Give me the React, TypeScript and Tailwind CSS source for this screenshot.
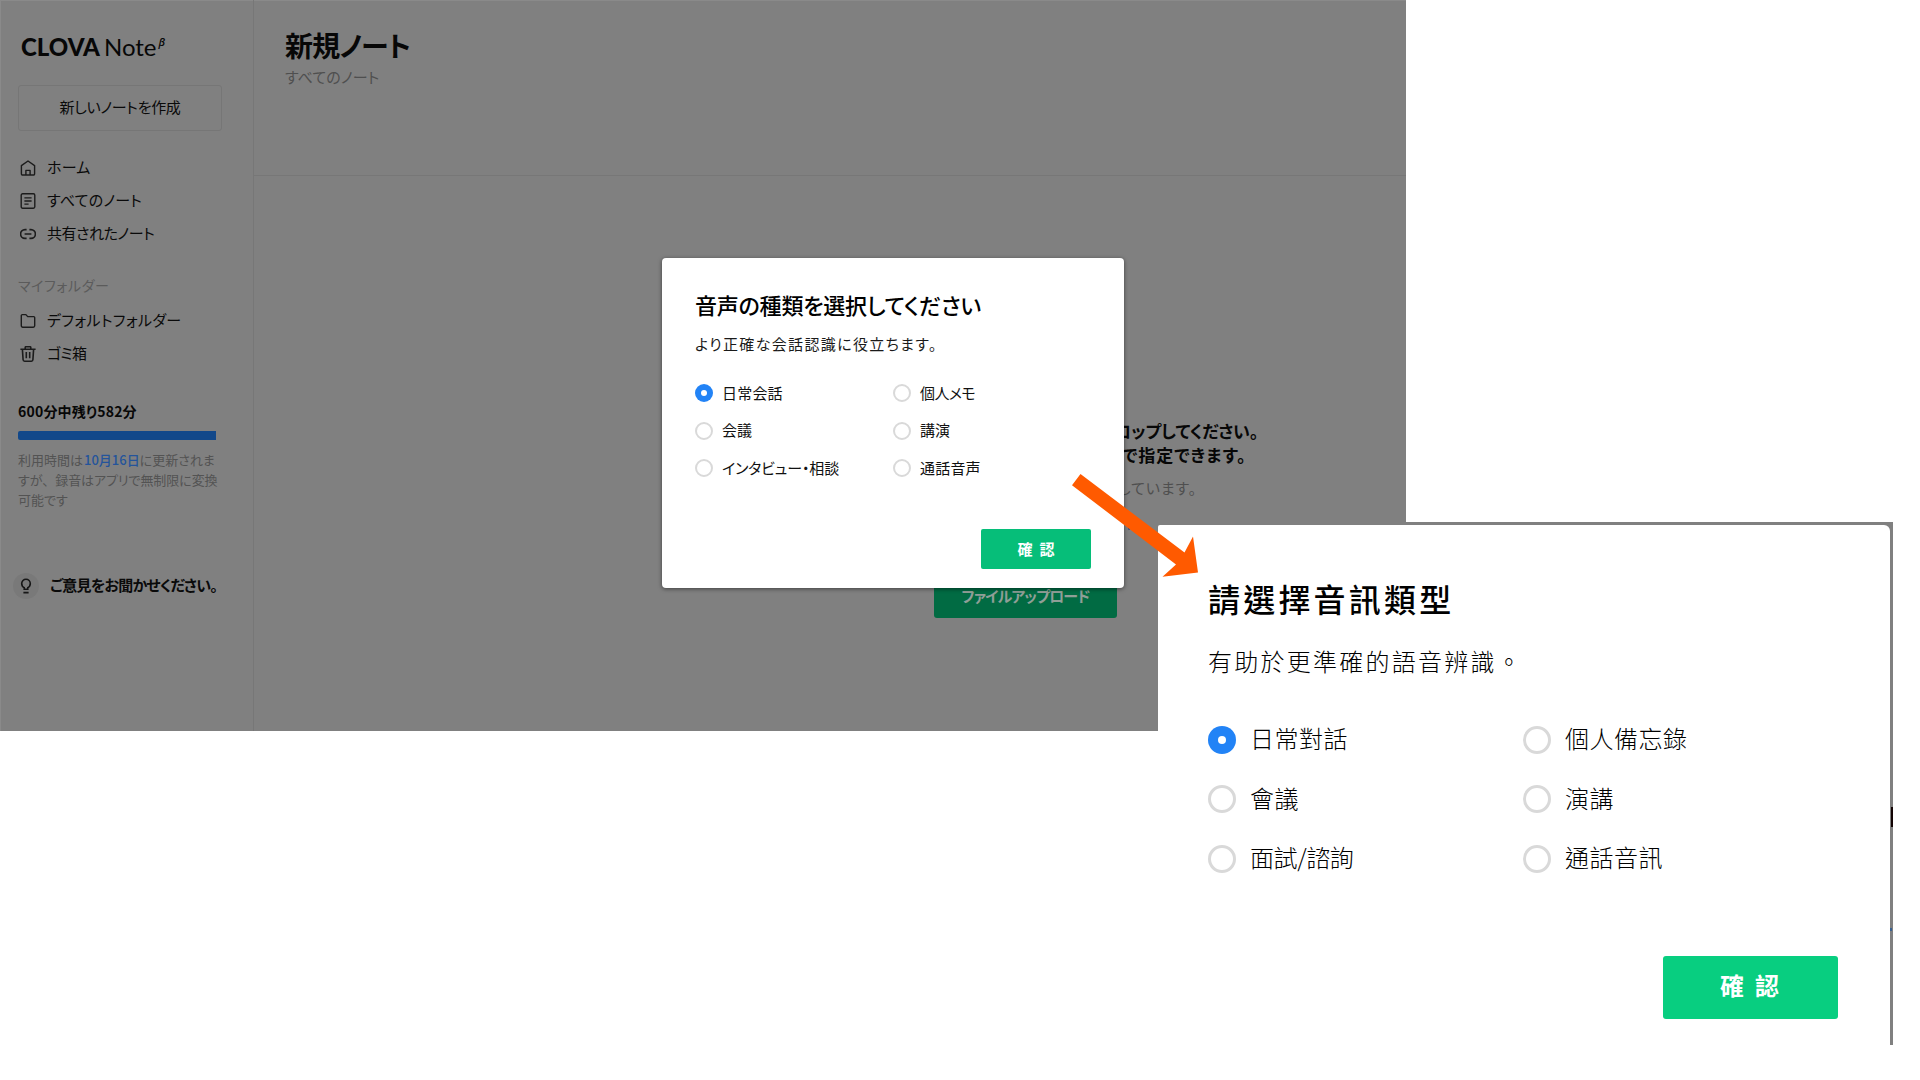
import type { ReactNode } from 'react'
import clsx from 'clsx'

const iconProps = {
  viewBox: '0 0 16 16',
  fill: 'none',
  stroke: 'currentColor',
  strokeWidth: 1.4,
  strokeLinejoin: 'round' as const,
  className: 'h-4 w-4 shrink-0 text-[#1c1c1c]',
}

function HomeIcon() {
  return (
    <svg {...iconProps}>
      <path d="M1.4 5.6 8 1l6.6 4.6v8.2a1.2 1.2 0 0 1-1.2 1.2H2.6a1.2 1.2 0 0 1-1.2-1.2z" />
      <path d="M5.9 15v-4.6h4.2V15" />
    </svg>
  )
}

function NoteIcon() {
  return (
    <svg {...iconProps}>
      <rect x="1.2" y="0.8" width="13.6" height="14.4" rx="1.4" />
      <path d="M4.4 4.9h7.2M4.4 8h7.2M4.4 11.1h4.2" />
    </svg>
  )
}

function LinkIcon() {
  return (
    <svg {...iconProps} strokeWidth={1.6}>
      <path d="M6.6 3.6H5a4.4 4.4 0 0 0 0 8.8h1.600M9.400 3.600H11a4.400 4.400 0 0 1 0 8.800H9.400M4.600 8h6.800" />
    </svg>
  )
}

function FolderIcon() {
  return (
    <svg {...iconProps}>
      <path d="M1.3 2.6a1 1 0 0 1 1-1h3.6l1.8 2h6a1 1 0 0 1 1 1v8.2a1.4 1.4 0 0 1-1.4 1.4H2.7a1.4 1.4 0 0 1-1.4-1.4z" />
    </svg>
  )
}

function TrashIcon() {
  return (
    <svg {...iconProps} strokeWidth={1.6}>
      <path d="M0.4 3.2h15.2M5.2 3V1.6a.9.9 0 0 1 .9-.9h3.8a.9.9 0 0 1 .9.9V3M2.4 3.4l.7 10.4a1.5 1.5 0 0 0 1.5 1.4h6.8a1.5 1.5 0 0 0 1.5-1.4l.7-10.4M6.3 6v6.2M9.7 6v6.2" />
    </svg>
  )
}

function BulbIcon() {
  return (
    <svg viewBox="0 0 12 16" fill="none" stroke="currentColor" strokeWidth="1.6" className="h-4 w-3 text-[#161616]">
      <path d="M4.2 11.2V9.7C2.7 8.9 1.7 7.5 1.7 5.5a4.3 4.3 0 0 1 8.6 0c0 2-1 3.4-2.5 4.2v1.5zM3.4 14.6h5.2" />
    </svg>
  )
}

function NavItem({ icon, label, tracking }: { icon: ReactNode; label: string; tracking?: string }) {
  return (
    <li className="flex h-[33px] items-center gap-[11px] pl-[2px]">
      {icon}
      <span className={clsx('pb-[2px] text-[15px] leading-none text-[#0a0a0a]', tracking)}>{label}</span>
    </li>
  )
}

function Sidebar() {
  return (
    <aside className="flex w-[254px] shrink-0 flex-col border-r border-[#777] pl-[18px]">
      <div className="mt-[31px] flex h-8 items-center pl-[3px] font-[Lato] text-2xl leading-none text-[#070707]">
        <span className="font-black">CLOVA</span>
        <span className="ml-[4px]">Note</span>
        <span className="mb-[12px] ml-[2px] font-['Open_Sans'] text-[11px] font-semibold italic">β</span>
      </div>

      <button
        type="button"
        className="mt-[22px] flex h-[46px] w-[204px] items-center justify-center rounded-[3px] border border-[#767676] pb-[4px] text-[15px] leading-none tracking-[-0.3px] text-[#0a0a0a]"
      >
        新しいノートを作成
      </button>

      <ul className="mt-5">
        <NavItem icon={<HomeIcon />} label="ホーム" tracking="tracking-[0.2px]" />
        <NavItem icon={<NoteIcon />} label="すべてのノート" tracking="tracking-[0.2px]" />
        <NavItem icon={<LinkIcon />} label="共有されたノート" tracking="tracking-[-0.45px]" />
      </ul>

      <p className="mt-[25px] flex h-5 items-center text-sm leading-none tracking-[0.600px] text-[#5b5b5b]">マイフォルダー</p>
      <ul className="mt-[9px]">
        <NavItem icon={<FolderIcon />} label="デフォルトフォルダー" tracking="tracking-[0.4px]" />
        <NavItem icon={<TrashIcon />} label="ゴミ箱" tracking="tracking-[-0.7px]" />
      </ul>

      <p className="mt-[31px] flex h-5 items-center text-sm leading-none font-bold tracking-[0.200px] text-[#070707]">
        600分中残り582分
      </p>
      <div className="mt-[10px] h-[9px] w-[198px] rounded-l-[2px] bg-[#12488a]" />
      <p className="mt-[10px] text-[13px] leading-5 whitespace-nowrap text-[#535353]">
        利用時間は<span className="ml-px font-medium text-[#24549b]">10月16日</span>に更新されま
        <br />
        <span className="tracking-[-0.080px]">
          すが<span className="[font-feature-settings:normal]">、</span>録音はアプリで無制限に変換
        </span>
        <br />
        可能です
      </p>

      <div className="mt-[63px] ml-[-5px] flex items-center gap-[11px]">
        <span className="grid h-[26px] w-[26px] place-items-center rounded-full bg-[#797979]">
          <BulbIcon />
        </span>
        <span className="pb-[3px] text-[15px] leading-none font-bold tracking-[-0.75px] text-[#0a0a0a]">ご意見をお聞かせください。</span>
      </div>
    </aside>
  )
}

function MainArea() {
  return (
    <main className="flex flex-1 flex-col">
      <header className="h-[176px] border-b border-[#777] pt-[30px] pl-[31px]">
        <h1 className="flex h-[30px] items-center text-[28px] leading-none font-bold tracking-[-0.8px] text-[#070707]">新規ノート</h1>
        <p className="mt-[6px] flex h-5 items-center text-[15px] leading-none tracking-[0.1px] text-[#4f4f4f]">すべてのノート</p>
      </header>
      <div className="flex flex-col pt-[242px] pl-[860px]">
        <p className="flex h-[25px] items-center text-[17px] leading-none font-bold tracking-[-0.1px] whitespace-nowrap text-[#070707]">
          ロップしてください。
        </p>
        <p className="flex h-[23px] items-center pl-[8px] text-[17px] leading-none font-bold tracking-[0.95px] whitespace-nowrap text-[#070707]">
          で指定できます。
        </p>
        <p className="mt-[11px] flex h-5 items-center pl-[4px] text-[15px] leading-none tracking-[0.9px] text-[#4f4f4f]">しています。</p>
        <p className="mt-[18px] flex h-5 items-center pl-[2px] text-[15px] leading-none text-[#12488a]">い</p>
      </div>
      <button
        type="button"
        className="mt-[41px] ml-[680px] flex h-[42px] w-[183px] items-center justify-center rounded-[3px] bg-[#016b43] pb-[3px] text-[15px] leading-none font-bold tracking-[-0.9px] text-[#8f9f97]"
      >
        ファイルアップロード
      </button>
    </main>
  )
}

function Radio({ checked, large }: { checked?: boolean; large?: boolean }) {
  return (
    <span
      className={clsx(
        'grid shrink-0 place-items-center rounded-full',
        large ? 'h-7 w-7' : 'h-[18px] w-[18px]',
        checked ? 'bg-[#2283f6]' : large ? 'border-[3px] border-[#d9d9d9]' : 'border-2 border-[#d9d9d9]',
      )}
    >
      {checked && <span className={clsx('rounded-full bg-white', large ? 'h-2 w-2' : 'h-1.5 w-1.5')} />}
    </span>
  )
}

const jaTypes = [
  { label: '日常会話', checked: true, tracking: 'tracking-[0.2px]' },
  { label: '個人メモ', tracking: 'tracking-[-0.6px]' },
  { label: '会議' },
  { label: '講演' },
  { label: 'インタビュー・相談', tracking: 'tracking-[-0.15px]' },
  { label: '通話音声', tracking: 'tracking-[0.2px]' },
]

function VoiceTypeDialog() {
  return (
    <div className="absolute top-[258px] left-[662px] flex h-[330px] w-[462px] flex-col rounded-[4px] bg-white pl-[33px] shadow-[0_1px_4px_rgba(0,0,0,0.5)]">
      <h2 className="mt-[31px] flex h-[30px] items-center text-[22px] leading-none font-medium tracking-[-0.2px] text-black">
        音声の種類を選択してください
      </h2>
      <p className="mt-[14px] flex h-5 items-center text-[15px] leading-none tracking-[1.35px] text-[#1a1a1a]">
        より正確な会話認識に役立ちます。
      </p>
      <div className="mt-[21.5px] grid grid-cols-[198px_1fr]">
        {jaTypes.map((t) => (
          <label key={t.label} className="flex h-[37.5px] items-center gap-[9px] text-[15px] leading-none text-[#111]">
            <Radio checked={t.checked} />
            <span className={clsx('pb-[2px]', t.tracking)}>{t.label}</span>
          </label>
        ))}
      </div>
      <button
        type="button"
        className="mt-[42px] ml-[286px] flex h-10 w-[110px] shrink-0 items-center justify-center gap-[7px] rounded-[2px] bg-[#06be79] pb-[2px] text-[15px] leading-none font-bold text-white"
      >
        <span>確</span>
        <span>認</span>
      </button>
    </div>
  )
}

const zhTypes = [
  { label: '日常對話', checked: true },
  { label: '個人備忘錄' },
  { label: '會議' },
  { label: '演講' },
  { label: '面試/諮詢', tracking: 'tracking-[-0.4px]' },
  { label: '通話音訊' },
]

function TranslatedDialog() {
  return (
    <div className="absolute top-[522px] left-[1158px] h-[523px] w-[735px] bg-[#808080] pt-[3px] pr-[3px] font-['Noto_Sans_CJK_TC',sans-serif] [font-feature-settings:normal]">
      <div className="flex h-full flex-col rounded-tl-[2px] rounded-tr-[6px] bg-white pl-[50px]">
        <h2 className="mt-[53px] flex h-10 items-center text-[32px] leading-none font-medium tracking-[3.200px] text-black">請選擇音訊類型</h2>
        <p className="mt-[28px] flex h-[30px] items-center text-2xl leading-none font-light tracking-[2.250px] text-black">
          有助於更準確的語音辨識。
        </p>
        <div className="mt-[34px] grid grid-cols-[315px_1fr]">
          {zhTypes.map((t) => (
            <label
              key={t.label}
              className="flex h-[59.5px] items-center gap-[14px] text-2xl leading-none font-light text-black"
            >
              <Radio large checked={t.checked} />
              <span className={clsx('pb-[3px]', t.tracking ?? 'tracking-[0.500px]')}>{t.label}</span>
            </label>
          ))}
        </div>
        <button
          type="button"
          className="mt-[67px] ml-[455px] flex h-[63px] w-[175px] shrink-0 items-center justify-center gap-[11px] rounded-[3px] bg-[#08ce80] pr-[2px] pb-1 text-2xl leading-none font-bold text-white"
        >
          <span>確</span>
          <span>認</span>
        </button>
      </div>
      {/* slivers of the page behind the dialog */}
      <span className="absolute top-[285px] right-0 h-5 w-[2px] bg-[#120303]" />
      <span className="absolute top-[406px] right-[1px] h-[3px] w-[2px] bg-[#3a6190]" />
    </div>
  )
}

export default function App() {
  return (
    <div className="relative h-[1080px] w-[1920px] overflow-hidden bg-white font-['Noto_Sans_CJK_JP',sans-serif] [font-feature-settings:'palt']">
      <div className="flex h-[731px] w-[1406px] bg-[#808080] shadow-[inset_1px_1px_0_#8a8a8a]">
        <Sidebar />
        <MainArea />
      </div>

      <VoiceTypeDialog />
      <TranslatedDialog />

      <svg viewBox="0 0 128 104" className="absolute top-[473px] left-[1071px] h-[104px] w-[128px]" fill="#ff5a00">
        <path d="M9.5 1 113.5 79.5 122 63.5 127 99.5 91.5 103.8 105 91.5 1 12.2z" />
      </svg>
    </div>
  )
}
